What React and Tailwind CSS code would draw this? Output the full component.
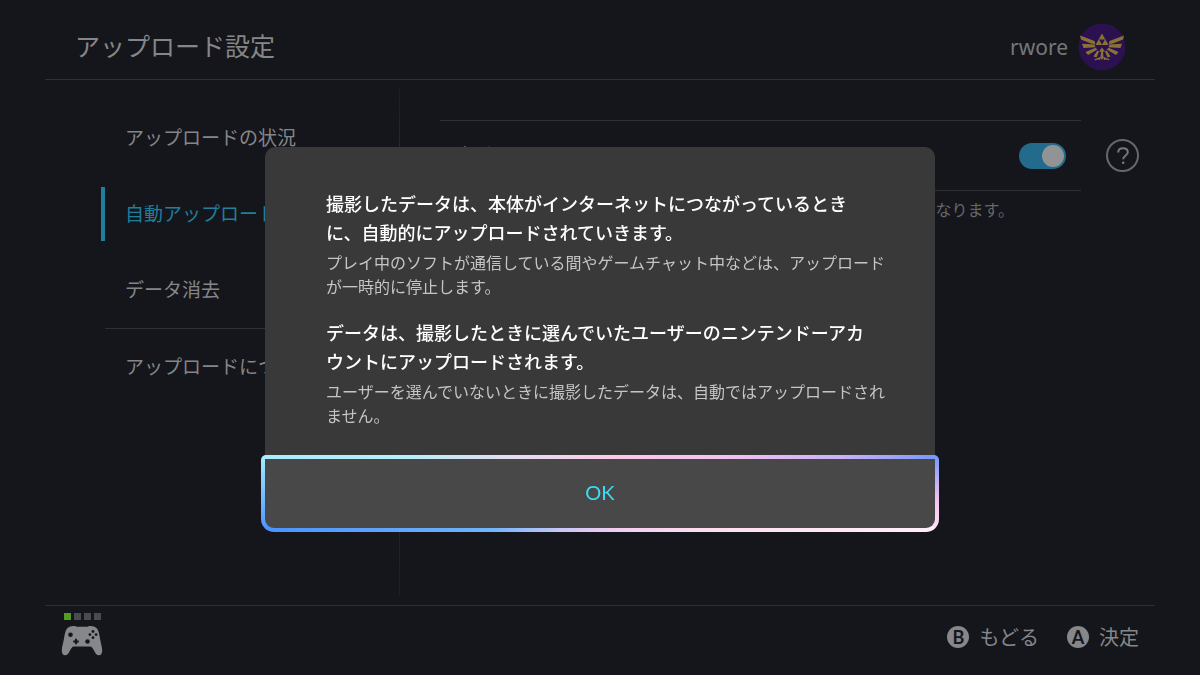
import React, { useState } from 'react';

const navItems = [
  { id: 'status', label: 'アップロードの状況' },
  { id: 'auto', label: '自動アップロード' },
  { id: 'delete', label: 'データ消去' },
  { id: 'about', label: 'アップロードについて', separated: true },
];

const messages = [
  {
    title: ['撮影したデータは、本体がインターネットにつながっているとき', 'に、自動的にアップロードされていきます。'],
    note: ['プレイ中のソフトが通信している間やゲームチャット中などは、アップロード', 'が一時的に停止します。'],
  },
  {
    title: ['データは、撮影したときに選んでいたユーザーのニンテンドーアカ', 'ウントにアップロードされます。'],
    note: ['ユーザーを選んでいないときに撮影したデータは、自動ではアップロードされ', 'ません。'],
  },
];

const Lines = ({ lines }) =>
  lines.map((line) => (
    <span key={line} className="block whitespace-nowrap">
      {line}
    </span>
  ));

const Avatar = () => (
  <svg viewBox="0 0 48 48" className="size-12" role="img" aria-label="rwore">
    <circle cx="24" cy="24" r="23.5" fill="#2b1150" />
    <g fill="#8a7236">
      <path d="M24 10.500 17.500 22h13zM24 21.800l-3-5.300h6z" fillRule="evenodd" />
      <path d="M2 12.500 16.500 18l.8 3.300-4.300-.8L3 16.500z" />
      <path d="M4 20.800l12.500.7 1 2.800-12 .8z" />
      <path d="M7.500 29l10-4.200 1.800 1.700-9.300 5.500z" />
      <path d="M46 12.500 31.500 18l-.8 3.300 4.300-.8L45 16.500z" />
      <path d="M44 20.800l-12.500.7-1 2.800 12 .8z" />
      <path d="M40.500 29l-10-4.200-1.800 1.700 9.300 5.500z" />
      <path d="M15.500 33.500l3.800-6 1.700 1-2.500 6zM32.500 33.500l-3.800-6-1.700 1 2.500 6z" />
      <path d="M24 24.500l3 4-2 .3.500 6L24 37l-1.500-2.200.5-6-2-.3z" />
      <path d="M16 36.500l4.500-1.700 2.300-1.300-.8 3.500-2.500-.5-2 .8zM32 36.500l-4.500-1.700-2.300-1.300.8 3.500 2.500-.5 2 .8z" />
    </g>
  </svg>
);

const Controller = () => (
  <svg viewBox="0 0 42 31" className="h-[31px] w-[42px]" role="img" aria-label="コントローラー">
    <path
      fill="#85878a"
      d="M6.500 3C8.500 1.200 12 .5 14.500 1.300c1 .5 1.500.5 2.500.5h8c1 0 1.500 0 2.500-.5C30 .5 33.500 1.200 35.500 3c2 2 2.800 6 3.500 10.500.8 5 2.200 8.500 2.200 12 0 3-1.200 4.800-3.200 4.800-2.500 0-3.600-2-5-4.800-1.200-2.300-2.200-4-4-4H13c-1.800 0-2.800 1.700-4 4-1.400 2.800-2.500 4.800-5 4.800-2 0-3.200-1.800-3.200-4.800 0-3.500 1.400-7 2.200-12C3.700 9 4.500 5 6.500 3z"
    />
    <g fill="#15161b">
      <circle cx="9.500" cy="9.700" r="2.300" />
      <circle cx="26.500" cy="16.500" r="2.300" />
      <path d="M14 13.700h2v1.800h1.800v2H16v1.800h-2v-1.800h-1.800v-2H14z" />
      <circle cx="32" cy="6.500" r="1.400" />
      <circle cx="32" cy="12.700" r="1.400" />
      <circle cx="28.900" cy="9.600" r="1.400" />
      <circle cx="35.100" cy="9.600" r="1.400" />
    </g>
  </svg>
);

const FooterButton = ({ letter, label }) => (
  <button type="button" className="flex items-center gap-[10px] text-xl leading-6">
    <span className="flex size-[22px] items-center justify-center rounded-full bg-[#85878a] font-[family-name:Lato,sans-serif] text-lg font-bold text-[#15161b]">
      {letter}
    </span>
    {label}
  </button>
);

const App = () => {
  const [active, setActive] = useState('auto');
  const [enabled, setEnabled] = useState(true);
  const [dialogOpen, setDialogOpen] = useState(true);

  return (
    <div className="flex min-h-screen flex-col bg-[#15161b] px-[45px] font-['Noto_Sans_CJK_JP',sans-serif] text-[#85868a]">
      <header className="flex h-20 items-center justify-between border-b border-[#2f3034] pt-[14px] pr-[29px] pl-[30px]">
        <h1 className="pb-1 text-[25px] leading-8">アップロード設定</h1>
        <div className="flex items-center gap-[10px]">
          <span className="font-['Noto_Sans',sans-serif] text-[21px] leading-8 text-[#757679]">rwore</span>
          <Avatar />
        </div>
      </header>

      <main className="flex flex-1">
        <nav className="w-[354px] shrink-0 pt-[31px] pl-14">
          <ul className="flex flex-col gap-[22px]">
            {navItems.map(({ id, label, separated }) => (
              <li key={id} className={separated ? '-mt-[11px] mr-10 ml-1 border-t border-[#2f3034] pt-[11px]' : 'ml-0'}>
                <button
                  type="button"
                  onClick={() => setActive(id)}
                  className={`flex h-[54px] items-center pb-px pl-5 text-[19px] whitespace-nowrap ${
                    separated ? '' : 'border-l-4'
                  } ${id === active ? 'border-[#1f7f9c] text-[#1f7f9c]' : 'border-transparent'}`}
                >
                  {label}
                </button>
              </li>
            ))}
          </ul>
        </nav>
        <div className="my-[9px] w-px bg-linear-to-b from-[#1c1d22] via-[#2f3034] via-20% to-[#1f2025]" />

        <section className="flex-1 pt-10 pr-4 pl-10">
          <div className="flex items-center gap-[25px]">
            <div className="flex h-[71px] flex-1 items-center justify-between border-y border-[#2f3034] px-[15px]">
              <label htmlFor="auto-upload" className="text-xl">
                自動アップロード
              </label>
              <input
                id="auto-upload"
                type="checkbox"
                role="switch"
                checked={enabled}
                onChange={(e) => setEnabled(e.target.checked)}
                className="h-[26px] w-[47px] appearance-none rounded-full bg-[#4a4b4f] p-[2px] before:block before:size-[22px] before:rounded-full before:bg-[#929394] checked:bg-[#226b8c] checked:before:ml-auto"
              />
            </div>
            <button
              type="button"
              aria-label="ヘルプ"
              className="flex size-[33px] items-center justify-center rounded-full border-2 border-[#66676b] text-[#77787c]"
            >
              <svg viewBox="0 0 16 20" className="h-5 w-4" fill="none" stroke="currentColor" strokeWidth="2">
                <path d="M3.200 6.500C3.200 3.800 5.200 2.300 8 2.300s4.800 1.500 4.800 4c0 3.200-4.600 3.400-4.600 7" />
                <circle cx="8.200" cy="16.800" r="1.300" fill="currentColor" stroke="none" />
              </svg>
            </button>
          </div>
          <p className="pt-[6px] pr-[125px] text-right text-base leading-6 text-[#66676b]">なります。</p>
        </section>
      </main>

      <footer className="flex h-[70px] items-start justify-between border-t border-[#2f3034] px-4 pt-[7px]">
        <div>
          <div className="flex gap-[3px] pb-[5px] pl-[3px]">
            <span className="size-[7px] bg-[#559c24]" />
            <span className="size-[7px] bg-[#4a4b4f]" />
            <span className="size-[7px] bg-[#4a4b4f]" />
            <span className="size-[7px] bg-[#4a4b4f]" />
          </div>
          <Controller />
        </div>
        <div className="flex gap-7 pt-3">
          <FooterButton letter="B" label="もどる" />
          <FooterButton letter="A" label="決定" />
        </div>
      </footer>

      {dialogOpen && (
        <div className="fixed inset-0 flex items-center justify-center pt-[3px]">
          <div role="dialog" aria-modal="true" className="w-[670px] max-w-full">
            <div className="flex flex-col gap-5 rounded-t-[10px] bg-[#383938] px-[61px] pt-[42px] pb-7">
              {messages.map(({ title, note }) => (
                <div key={title[0]} className="flex flex-col gap-[3px]">
                  <p className="text-lg leading-[29px] font-medium text-white">
                    <Lines lines={title} />
                  </p>
                  <p className="text-base leading-6 text-[#c4c5c4]">
                    <Lines lines={note} />
                  </p>
                </div>
              ))}
            </div>
            {/* Botón con marco de foco degradado */}
            <button
              type="button"
              autoFocus
              onClick={() => setDialogOpen(false)}
              className="-mx-1 block w-[678px] rounded-t-[5px] rounded-b-[13px] bg-[linear-gradient(90deg,#a9ecff,#b4effa_20%,#e6dcf2_38%,#fcc9ea_52%,#f3c3f0_68%,#c9b0f8_86%,#7497ff),linear-gradient(90deg,#4a92ff,#70b4fb_34%,#c5c8f5_44%,#f0cdf0_52%,#ffdcf0_64%,#fff0fb),linear-gradient(180deg,#a9ecff,#4a92ff),linear-gradient(180deg,#7497ff,#f5c4ee_60%,#ffe4f8)] bg-[length:100%_4px,100%_5px,50%_100%,50%_100%] bg-[position:top,bottom,left,right] bg-no-repeat p-1 outline-none"
            >
              <span className="flex h-[69px] items-center justify-center rounded-b-[9px] bg-[#484848] pb-[2px] font-[family-name:Lato,sans-serif] text-xl text-[#3cdcf8]">
                OK
              </span>
            </button>
          </div>
        </div>
      )}
    </div>
  );
};

export default App;
